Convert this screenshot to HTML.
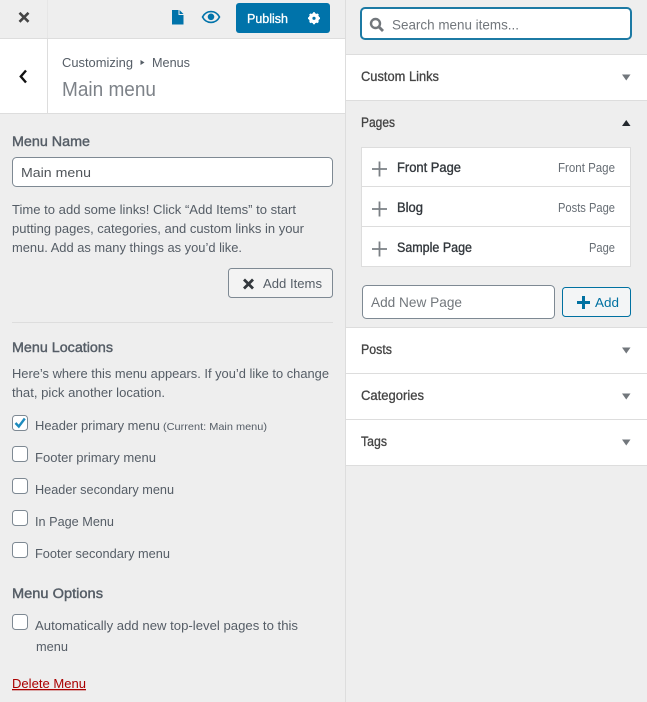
<!DOCTYPE html>
<html><head><meta charset="utf-8"><style>
html,body{margin:0;padding:0;background:#eee}
svg{display:block}
text{font-family:"Liberation Sans",sans-serif;font-size:13px;fill:#555d66}
.b{fill:#555d66;stroke:#555d66;stroke-width:.4;font-size:13.500px}
.h{fill:#444;stroke:#444;stroke-width:.3;font-size:13.500px}
.s{fill:#666d74;font-size:12.500px}
.t{fill:#32373c;stroke:#32373c;stroke-width:.35;font-size:13.500px}
</style></head><body>
<svg xmlns="http://www.w3.org/2000/svg" width="647" height="702" viewBox="0 0 647 702">
<rect width="647" height="702" fill="#eee"/>
<!-- Top bar -->
<rect x="0" y="38" width="345" height="1" fill="#ddd"/>
<rect x="47" y="0" width="1" height="38" fill="#e6e6e6"/>
<path d="M19.500 12.800L28.500 21.800M28.500 12.800L19.500 21.800" stroke="#444" stroke-width="2.600" fill="none"/>
<path d="M172 10h7.500l4 4v10.500h-11.500z" fill="#0073aa"/><path d="M179 10v4.500h4.500" fill="none" stroke="#eee" stroke-width="1"/>
<path d="M202.500 17c2-3.800 5-5.400 8.500-5.400s6.500 1.600 8.500 5.400c-2 3.800-5 5.400-8.500 5.400s-6.500-1.600-8.500-5.400z" fill="none" stroke="#0073aa" stroke-width="1.600"/><circle cx="211" cy="16.800" r="3.300" fill="#0073aa"/>
<rect x="236" y="3" width="94" height="30" rx="3" fill="#0073aa"/>
<text x="247" y="23" textLength="41" lengthAdjust="spacingAndGlyphs" style="fill:#fff;stroke:#fff;stroke-width:.3">Publish</text>
<circle cx="314" cy="18.300" r="3.800" fill="none" stroke="#fff" stroke-width="2.800"/>
<path d="M314 12.300v12M308 18.300h12M309.800 14.100l8.400 8.400M318.200 14.100l-8.400 8.400" stroke="#fff" stroke-width="2"/>
<circle cx="314" cy="18.300" r="1.600" fill="#0073aa"/>
<!-- Panel title -->
<rect x="0" y="39" width="345" height="74" fill="#fff"/>
<rect x="0" y="113" width="345" height="1" fill="#ddd"/>
<rect x="47" y="39" width="1" height="74" fill="#ddd"/>
<path d="M26 70.500L20.800 76.500L26 82.500" stroke="#111" stroke-width="2.400" fill="none"/>
<text x="62" y="67" textLength="71" lengthAdjust="spacingAndGlyphs">Customizing</text>
<path d="M140.500 60l4 2.500-4 2.500z" fill="#555d66"/>
<text x="152" y="67" textLength="38" lengthAdjust="spacingAndGlyphs">Menus</text>
<text x="62" y="96" textLength="94" lengthAdjust="spacingAndGlyphs" style="font-size:20px;fill:#7d8288">Main menu</text>
<!-- Menu name -->
<text class="b" x="12" y="146" textLength="78" lengthAdjust="spacingAndGlyphs">Menu Name</text>
<rect x="12.500" y="157.500" width="320" height="29" rx="4" fill="#fff" stroke="#7e8993"/>
<text x="21" y="177" textLength="70" lengthAdjust="spacingAndGlyphs" style="fill:#50555a">Main menu</text>
<text x="12" y="214" textLength="284" lengthAdjust="spacingAndGlyphs">Time to add some links! Click “Add Items” to start</text>
<text x="12" y="233" textLength="292" lengthAdjust="spacingAndGlyphs">putting pages, categories, and custom links in your</text>
<text x="12" y="252" textLength="230" lengthAdjust="spacingAndGlyphs">menu. Add as many things as you’d like.</text>
<rect x="228.500" y="268.500" width="104" height="29" rx="3" fill="#f3f3f3" stroke="#7e8993"/>
<path d="M244 279.500L253 288.500M253 279.500L244 288.500" stroke="#32373c" stroke-width="2.800"/>
<text x="263" y="288" textLength="59" lengthAdjust="spacingAndGlyphs">Add Items</text>
<rect x="12" y="322" width="321" height="1" fill="#ddd"/>
<!-- Menu locations -->
<text class="b" x="12" y="352" textLength="101" lengthAdjust="spacingAndGlyphs">Menu Locations</text>
<text x="12" y="378" textLength="317" lengthAdjust="spacingAndGlyphs">Here’s where this menu appears. If you’d like to change</text>
<text x="12" y="397" textLength="153" lengthAdjust="spacingAndGlyphs">that, pick another location.</text>
<g fill="#fff" stroke="#7e8993"><rect x="12.500" y="415.500" width="15" height="15" rx="3"/><rect x="12.500" y="446.500" width="15" height="15" rx="3"/><rect x="12.500" y="478.500" width="15" height="15" rx="3"/><rect x="12.500" y="510.500" width="15" height="15" rx="3"/><rect x="12.500" y="542.500" width="15" height="15" rx="3"/><rect x="12.500" y="614.500" width="15" height="15" rx="3"/></g>
<path d="M15.500 423l3.300 3.500 6-8" stroke="#1e8cbe" stroke-width="2.400" fill="none"/>
<text x="35" y="430" textLength="125" lengthAdjust="spacingAndGlyphs">Header primary menu</text>
<text x="163" y="430" textLength="104" lengthAdjust="spacingAndGlyphs" style="font-size:10.500px">(Current: Main menu)</text>
<text x="35" y="462" textLength="121" lengthAdjust="spacingAndGlyphs">Footer primary menu</text>
<text x="35" y="494" textLength="139" lengthAdjust="spacingAndGlyphs">Header secondary menu</text>
<text x="35" y="526" textLength="79" lengthAdjust="spacingAndGlyphs">In Page Menu</text>
<text x="35" y="558" textLength="135" lengthAdjust="spacingAndGlyphs">Footer secondary menu</text>
<text class="b" x="12" y="598" textLength="91" lengthAdjust="spacingAndGlyphs">Menu Options</text>
<text x="35" y="630" textLength="263" lengthAdjust="spacingAndGlyphs">Automatically add new top-level pages to this</text>
<text x="36" y="651" textLength="32" lengthAdjust="spacingAndGlyphs">menu</text>
<text x="12" y="688" textLength="74" lengthAdjust="spacingAndGlyphs" style="fill:#a00;text-decoration:underline">Delete Menu</text>
<!-- Right column -->
<rect x="345" y="0" width="1" height="702" fill="#ddd"/>
<rect x="361" y="8" width="270" height="31" rx="4" fill="#fff" stroke="#1c7aa4" stroke-width="2"/>
<circle cx="375.500" cy="23.500" r="4.500" fill="none" stroke="#72777c" stroke-width="2.400"/><path d="M379 27l4 4" stroke="#72777c" stroke-width="2.800"/>
<text x="392" y="29.500" textLength="127" lengthAdjust="spacingAndGlyphs" style="fill:#72777c;font-size:14px">Search menu items...</text>
<!-- Sections -->
<rect x="346" y="54" width="301" height="47" fill="#ddd"/><rect x="346" y="55" width="301" height="45" fill="#fff"/>
<text class="h" x="361" y="81" textLength="78" lengthAdjust="spacingAndGlyphs">Custom Links</text>
<path d="M622 74.500h8.500l-4.250 6z" fill="#72777c"/>
<text class="h" x="361" y="127" textLength="34" lengthAdjust="spacingAndGlyphs">Pages</text>
<path d="M622 126h8.500l-4.250-6z" fill="#23282d"/>
<rect x="361.500" y="147.500" width="269" height="119" fill="#fff" stroke="#ddd"/>
<rect x="362" y="186" width="268" height="1" fill="#ddd"/><rect x="362" y="226" width="268" height="1" fill="#ddd"/>
<path d="M372 169h15M379.500 161.500v15M372 209h15M379.500 201.500v15M372 249h15M379.500 241.500v15" stroke="#7b8085" stroke-width="1.800"/>
<text class="t" x="397" y="172" textLength="64" lengthAdjust="spacingAndGlyphs">Front Page</text>
<text class="t" x="397" y="212" textLength="26" lengthAdjust="spacingAndGlyphs">Blog</text>
<text class="t" x="397" y="252" textLength="75" lengthAdjust="spacingAndGlyphs">Sample Page</text>
<text class="s" x="558" y="172" textLength="57" lengthAdjust="spacingAndGlyphs">Front Page</text>
<text class="s" x="558" y="212" textLength="57" lengthAdjust="spacingAndGlyphs">Posts Page</text>
<text class="s" x="589" y="252" textLength="26" lengthAdjust="spacingAndGlyphs">Page</text>
<rect x="362.500" y="285.500" width="192" height="33" rx="4" fill="#fff" stroke="#7e8993"/>
<text x="371" y="307" textLength="91" lengthAdjust="spacingAndGlyphs" style="fill:#72777c;font-size:14px">Add New Page</text>
<rect x="562.500" y="287.500" width="68" height="29" rx="3" fill="#f3f5f6" stroke="#0071a1"/>
<path d="M577 302.500h13M583.500 296v13" stroke="#0071a1" stroke-width="3"/>
<text x="595" y="307" textLength="24" lengthAdjust="spacingAndGlyphs" style="fill:#0071a1">Add</text>
<rect x="346" y="327" width="301" height="139" fill="#ddd"/>
<rect x="346" y="328" width="301" height="45" fill="#fff"/>
<rect x="346" y="374" width="301" height="45" fill="#fff"/>
<rect x="346" y="420" width="301" height="45" fill="#fff"/>
<text class="h" x="361" y="354" textLength="31" lengthAdjust="spacingAndGlyphs">Posts</text>
<text class="h" x="361" y="400" textLength="63" lengthAdjust="spacingAndGlyphs">Categories</text>
<text class="h" x="361" y="446" textLength="26" lengthAdjust="spacingAndGlyphs">Tags</text>
<path d="M622 347.500h8.500l-4.250 6zM622 393.500h8.500l-4.250 6zM622 439.500h8.500l-4.250 6z" fill="#72777c"/>
</svg>
</body></html>
